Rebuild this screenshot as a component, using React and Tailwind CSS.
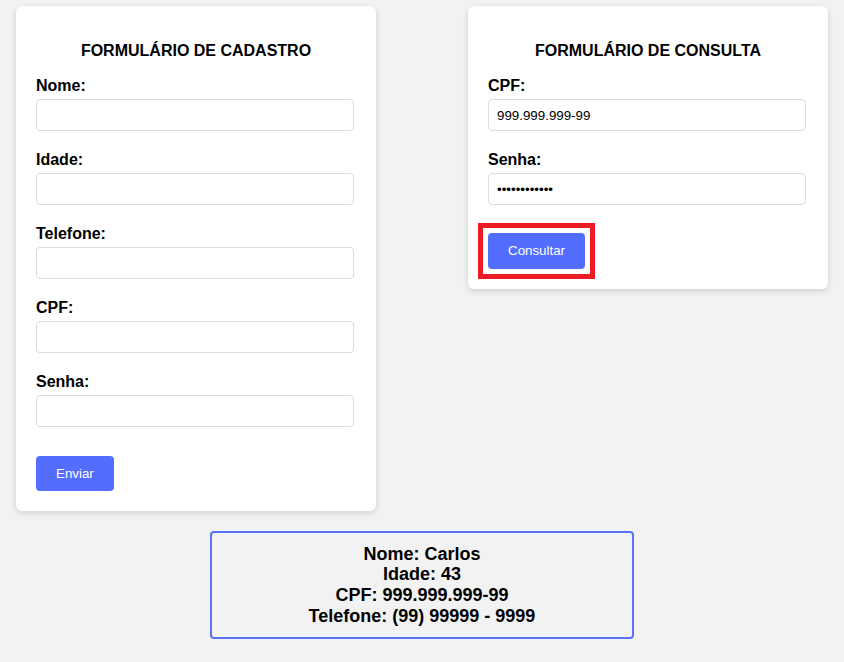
import React, { useState } from 'react';

const Field = ({ label, value, type = 'text' }) => (
  <div className="mb-[20px]">
    <label className="block text-[16px] font-bold leading-[18px] mb-[4px]">{label}</label>
    <input
      type={type}
      defaultValue={value}
      className="block w-[318px] h-[32px] px-[8px] border border-[#dcdcdc] rounded-[4px] bg-white text-[13.33px] text-black outline-none"
    />
  </div>
);

const App = () => {
  const [pessoa] = useState({
    nome: 'Carlos',
    idade: 43,
    cpf: '999.999.999-99',
    telefone: '(99) 99999 - 9999',
  });

  return (
    <div
      className="min-h-[662px] bg-[#f2f2f2] text-black pt-[6px]"
      style={{ fontFamily: '"Liberation Sans", Arial, sans-serif' }}
    >
      <div className="flex justify-between items-start px-4">
        <div className="w-[360px] bg-white rounded-[6px] shadow-[0_2px_6px_rgba(0,0,0,0.15)] px-5 pt-[36px] pb-[20px]">
          <h2 className="text-[16px] font-bold text-center leading-[18px] mb-[17px]">FORMULÁRIO DE CADASTRO</h2>
          <Field label="Nome:" />
          <Field label="Idade:" />
          <Field label="Telefone:" />
          <Field label="CPF:" />
          <Field label="Senha:" type="password" />
          <button className="mt-[9px] h-[35px] px-5 rounded-[4px] bg-[#536dfe] text-white text-[13.33px]">
            Enviar
          </button>
        </div>

        <div className="w-[360px] bg-white rounded-[6px] shadow-[0_2px_6px_rgba(0,0,0,0.15)] px-5 pt-[36px] pb-[10px]">
          <h2 className="text-[16px] font-bold text-center leading-[18px] mb-[17px]">FORMULÁRIO DE CONSULTA</h2>
          <Field label="CPF:" value="999.999.999-99" />
          <Field label="Senha:" value="123456789012" type="password" />
          <div className="inline-block -ml-[10px] -mt-[2px] border-[5px] border-[#ed1c24] p-[5px]">
            <button className="block h-[36px] px-5 rounded-[4px] bg-[#536dfe] text-white text-[13.33px]">
              Consultar
            </button>
          </div>
        </div>
      </div>

      <div className="flex justify-center mt-[20px]">
        <div className="w-[424px] h-[108px] border-2 border-[#5a72f5] rounded-[4px] flex flex-col items-center justify-center text-[18px] font-bold leading-[20.7px]">
          <div>Nome: {pessoa.nome}</div>
          <div>Idade: {pessoa.idade}</div>
          <div>CPF: {pessoa.cpf}</div>
          <div>Telefone: {pessoa.telefone}</div>
        </div>
      </div>
    </div>
  );
};

export default App;
